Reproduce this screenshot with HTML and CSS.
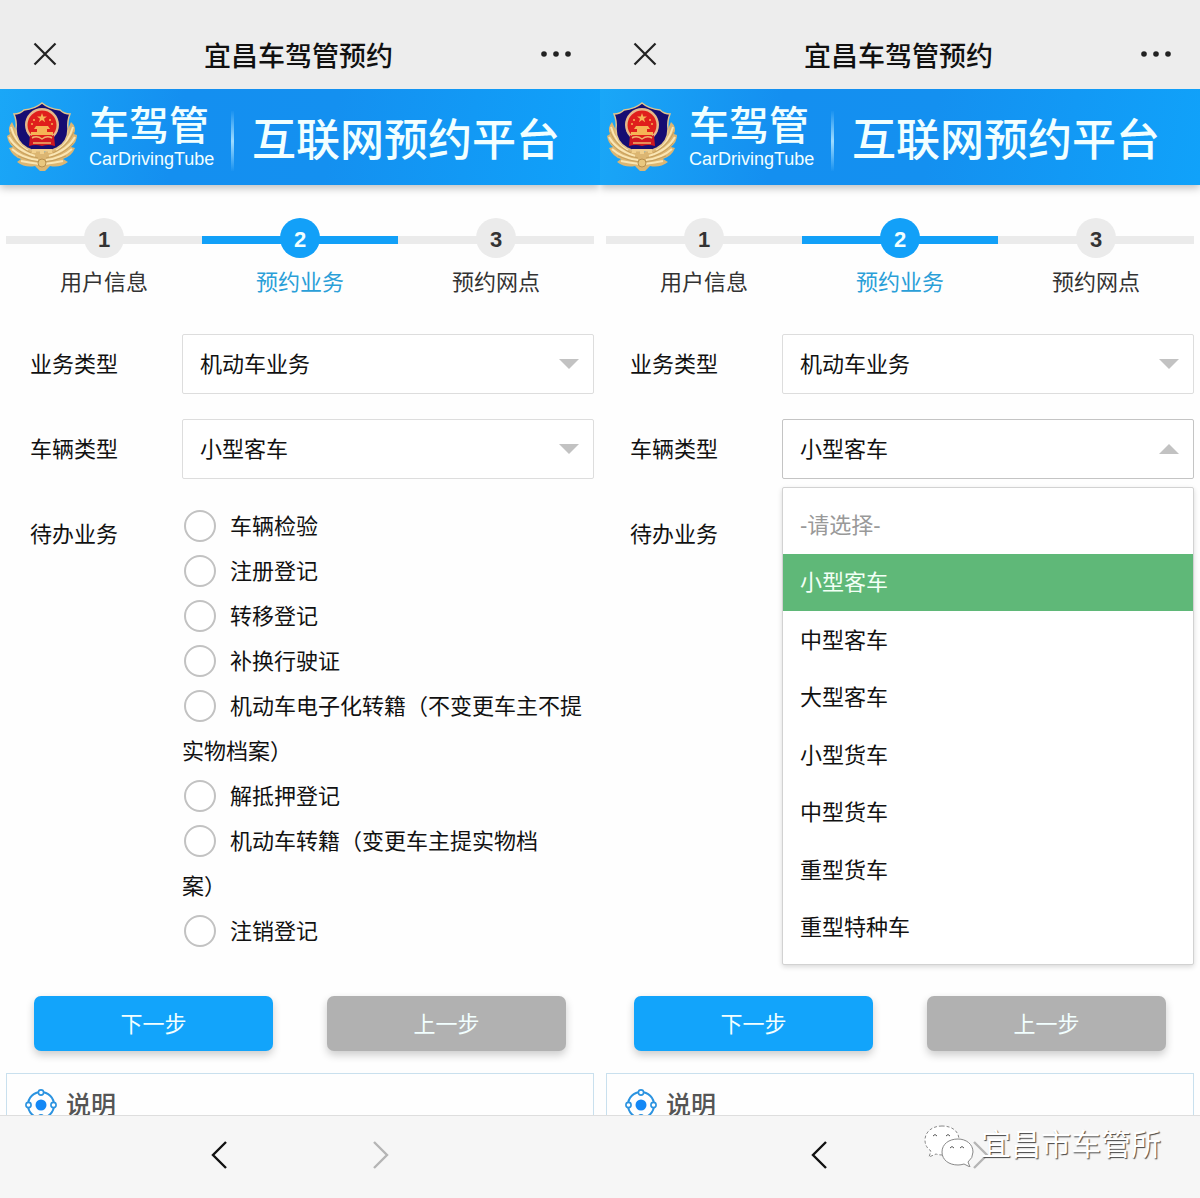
FILE: index.html
```html
<!DOCTYPE html>
<html lang="zh-CN">
<head>
  <meta charset="UTF-8" />
  <meta name="viewport" content="width=device-width, initial-scale=1" />
  <title>宜昌车驾管预约</title>
  <link rel="stylesheet" href="styles.css">
</head>
<body>

  <!-- shared icons -->
  <svg class="sprite" width="0" height="0" aria-hidden="true">
    <symbol id="icon-close" viewBox="0 0 24 24">
      <path d="M1.500 1.500 22.500 22.500M22.500 1.500 1.500 22.500" fill="none" stroke="#222" stroke-width="2.200" />
    </symbol>
    <symbol id="icon-more" viewBox="0 0 32 8">
      <g fill="#222"><circle cx="4" cy="4" r="2.800" /><circle cx="16" cy="4" r="2.800" /><circle cx="28" cy="4" r="2.800" /></g>
    </symbol>
    <symbol id="icon-back" viewBox="0 0 16 28">
      <path d="M15 1 2 14 15 27" fill="none" stroke="currentColor" stroke-width="2.400" />
    </symbol>
    <symbol id="icon-forward" viewBox="0 0 16 28">
      <path d="M1 1 14 14 1 27" fill="none" stroke="currentColor" stroke-width="2.400" />
    </symbol>
    <symbol id="icon-note" viewBox="0 0 32 32">
      <circle cx="16" cy="16" r="13" fill="none" stroke="#2b93e0" stroke-width="2" />
      <circle cx="16" cy="16" r="5.500" fill="#1488f5" />
      <g fill="#fff" stroke="#2b93e0" stroke-width="1.600">
        <circle cx="16" cy="3.500" r="2.600" /><circle cx="3.500" cy="16" r="2.600" />
        <circle cx="28.500" cy="16" r="2.600" /><circle cx="16" cy="28.500" r="2.600" />
      </g>
    </symbol>
    <symbol id="badge" viewBox="0 0 70 72">
      <path d="M5 21Q0 27 3 33L0 35Q1 42 6 46L2 47Q6 56 14 58L10 61Q18 67 28 65L33 70H38L43 65Q53 67 61 61L56 58Q65 55 68 47L64 46Q70 41 70 34L67 33Q70 26 64 21L56 40 36 52 14 40Z" fill="#dcb672" />
      <g fill="none" stroke="#fae6b4" stroke-width="2">
        <path d="M4 26Q8 41 21 49M2 36Q9 49 28 55M5 48Q15 57 31 59M14 60Q24 62 33 63" />
        <path d="M66 26Q62 41 49 49M68 36Q61 49 42 55M65 48Q55 57 39 59M56 60Q46 62 37 63" />
      </g>
      <g fill="none" stroke="#b8904f" stroke-width="0.600">
        <path d="M3 31Q9 45 24 52M4 42Q13 54 31 57M11 55Q22 60 33 61" />
        <path d="M67 31Q61 45 46 52M66 42Q57 54 39 57M59 55Q48 60 37 61" />
      </g>
      <path d="M35 2Q28 8 17 9Q13 13 7 13Q10 20 9 28Q9 41 20 47L27 50H43L50 47Q61 41 61 28Q60 20 63 13Q57 13 53 9Q42 8 35 2Z" fill="#160d72" stroke="#e2c48c" stroke-width="1.500" />
      <circle cx="35" cy="24" r="17" fill="#e7b98a" />
      <circle cx="35" cy="24" r="14.500" fill="#e01f1c" />
      <path d="M35 12 36.200 15.500H40L37 17.700 38.100 21.200 35 19 31.900 21.200 33 17.700 30 15.500H33.800Z" fill="#f6b455" />
      <g fill="#f6b455">
        <circle cx="27" cy="19" r="1" /><circle cx="43" cy="19" r="1" />
        <circle cx="25" cy="23" r="1" /><circle cx="45" cy="23" r="1" />
        <path d="M29 25H41L43 28H40V31H46V34H24V31H30V28H27Z" />
      </g>
      <path d="M23 34Q29 38 35 37Q41 38 47 34L48 45Q41 43 35 45Q29 43 22 45Z" fill="#cf1820" />
      <path d="M25 37Q30 34 35 38Q40 34 45 37M26 42H44" fill="none" stroke="#f0b56c" stroke-width="1.500" />
      <path d="M25 48H45V52H41V50H37V53H33V50H29V52H25Z" fill="#f1d08e" />
      <circle cx="35" cy="62" r="4" fill="#e9c77e" stroke="#b8904f" />
    </symbol>
    <symbol id="icon-wechat" viewBox="0 0 50 42">
      <g fill="#fff" stroke="#888" stroke-width="1">
        <path d="M18 2C8 2 1 8 1 16Q1 23 7 27L5 33 12 30Q15 31 19 31C28 31 35 25 35 16S28 2 18 2Z" stroke-dasharray="3 2" />
        <path d="M34 15C25 15 18 20 18 28S25 41 34 41Q37 41 40 40L46 43 44 38Q49 34 49 28C49 20 42 15 34 15Z" />
        <path d="M9 12Q11 9 13 12M22 12Q24 9 26 12M26 24Q28 21 30 24M36 24Q38 21 40 24" fill="none" stroke="#555" />
      </g>
    </symbol>
  </svg>

  <section class="screen">
    <header class="titlebar">
      <button class="icon-btn" aria-label="关闭"><svg width="24" height="24"><use href="#icon-close" /></svg></button>
      <h1>宜昌车驾管预约</h1>
      <button class="icon-btn" aria-label="更多"><svg width="32" height="8"><use href="#icon-more" /></svg></button>
    </header>
    <main>
      <div class="banner">
        <svg class="badge" width="70" height="72"><use href="#badge" /></svg>
        <div class="brand">
          <strong>车驾管</strong>
          <span>CarDrivingTube</span>
        </div>
        <div class="platform">互联网预约平台</div>
      </div>

      <ol class="steps">
        <li><b>1</b>用户信息</li>
        <li class="active"><b>2</b>预约业务</li>
        <li><b>3</b>预约网点</li>
      </ol>

      <form>
        <div class="field">
          <label for="type1">业务类型</label>
          <div class="select"><select id="type1"><option>机动车业务</option></select></div>
        </div>
        <div class="field">
          <label for="car1">车辆类型</label>
          <div class="select"><select id="car1"><option>小型客车</option></select></div>
        </div>
        <div class="field todo">
          <span class="caption" id="todo1">待办业务</span>
          <div class="radios" role="radiogroup" aria-labelledby="todo1">
            <label><input type="radio" name="todo">车辆检验</label>
            <label><input type="radio" name="todo">注册登记</label>
            <label><input type="radio" name="todo">转移登记</label>
            <label><input type="radio" name="todo">补换行驶证</label>
            <label><input type="radio" name="todo">机动车电子化转籍（不变更车主不提实物档案）</label>
            <label><input type="radio" name="todo">解抵押登记</label>
            <label><input type="radio" name="todo">机动车转籍（变更车主提实物档<br>案）</label>
            <label><input type="radio" name="todo">注销登记</label>
          </div>
        </div>
        <div class="actions">
          <button type="button" class="btn next">下一步</button>
          <button type="button" class="btn prev">上一步</button>
        </div>
      </form>

      <div class="note">
        <h2><svg width="32" height="32"><use href="#icon-note" /></svg>说明</h2>
      </div>
    </main>
    <footer class="toolbar">
      <button class="icon-btn" aria-label="后退"><svg width="16" height="28"><use href="#icon-back" /></svg></button>
      <button class="icon-btn" aria-label="前进" disabled><svg width="16" height="28"><use href="#icon-forward" /></svg></button>
    </footer>
  </section>

  <section class="screen">
    <header class="titlebar">
      <button class="icon-btn" aria-label="关闭"><svg width="24" height="24"><use href="#icon-close" /></svg></button>
      <h1>宜昌车驾管预约</h1>
      <button class="icon-btn" aria-label="更多"><svg width="32" height="8"><use href="#icon-more" /></svg></button>
    </header>
    <main>
      <div class="banner">
        <svg class="badge" width="70" height="72"><use href="#badge" /></svg>
        <div class="brand">
          <strong>车驾管</strong>
          <span>CarDrivingTube</span>
        </div>
        <div class="platform">互联网预约平台</div>
      </div>

      <ol class="steps">
        <li><b>1</b>用户信息</li>
        <li class="active"><b>2</b>预约业务</li>
        <li><b>3</b>预约网点</li>
      </ol>

      <form>
        <div class="field">
          <label for="type2">业务类型</label>
          <div class="select"><select id="type2"><option>机动车业务</option></select></div>
        </div>
        <div class="field">
          <label for="car2">车辆类型</label>
          <div class="select open">
            <select id="car2"><option>小型客车</option></select>
            <ul class="dropdown" role="listbox">
              <li class="tips" role="option">-请选择-</li>
              <li class="selected" role="option" aria-selected="true">小型客车</li>
              <li role="option">中型客车</li>
              <li role="option">大型客车</li>
              <li role="option">小型货车</li>
              <li role="option">中型货车</li>
              <li role="option">重型货车</li>
              <li role="option">重型特种车</li>
            </ul>
          </div>
        </div>
        <div class="field todo">
          <span class="caption">待办业务</span>
        </div>
        <div class="actions">
          <button type="button" class="btn next">下一步</button>
          <button type="button" class="btn prev">上一步</button>
        </div>
      </form>

      <div class="note">
        <h2><svg width="32" height="32"><use href="#icon-note" /></svg>说明</h2>
      </div>
    </main>
    <footer class="toolbar">
      <button class="icon-btn" aria-label="后退"><svg width="16" height="28"><use href="#icon-back" /></svg></button>
      <button class="icon-btn" aria-label="前进" disabled><svg width="16" height="28"><use href="#icon-forward" /></svg></button>
      <div class="watermark"><svg width="50" height="44"><use href="#icon-wechat" /></svg>宜昌市车管所</div>
    </footer>
  </section>

</body>
</html>
```

FILE: styles.css
```css
* {
  margin: 0;
  padding: 0;
  box-sizing: border-box;
}

body {
  display: flex;
  height: 100vh;
  background: #fefefe;
  color: #111;
  font-family: "Liberation Sans", "Noto Sans CJK SC", sans-serif;
  font-size: 22px;
}

.sprite {
  position: absolute;
}

svg {
  display: block;
  flex: none;
}

ol, ul {
  list-style: none;
}

button, select {
  font: inherit;
}

.screen {
  flex: 1;
  min-width: 0;
  display: flex;
  flex-direction: column;
}

.screen main {
  flex: 1;
  min-height: 0;
  overflow: hidden;
}

/* title bar */
.titlebar {
  display: flex;
  align-items: center;
  justify-content: space-between;
  height: 89px;
  padding: 19px 28px 0 33px;
  background: #ededed;
}

.titlebar h1 {
  font-size: 27px;
  font-weight: 500;
}

.icon-btn {
  border: none;
  background: none;
  color: #111;
  cursor: pointer;
}

.icon-btn:disabled {
  color: #b5b5b5;
}

/* banner */
.banner {
  display: flex;
  align-items: center;
  height: 96px;
  padding-left: 7px;
  background: linear-gradient(100deg, #1aa7f7 0%, #148ff0 30%, #1490f0 55%, #10a2fa 100%);
  box-shadow: 0 3px 8px rgba(0, 0, 0, 0.25);
  color: #f2ffff;
}

.brand {
  width: 142px;
  margin-left: 12px;
}

.brand strong {
  display: block;
  font-size: 40px;
  font-weight: 500;
  line-height: 44px;
}

.brand span {
  display: block;
  font-size: 18px;
  line-height: 22px;
}

.platform {
  margin-top: 8px;
  padding-left: 18px;
  border-left: 3px solid;
  border-image: linear-gradient(transparent, #9fdcff, transparent) 1;
  font-size: 44px;
  font-weight: 500;
  line-height: 60px;
  white-space: nowrap;
}

/* steps */
.steps {
  display: flex;
  padding: 33px 6px 0;
  line-height: 32px;
}

.steps li {
  flex: 1;
  display: flex;
  flex-direction: column;
  align-items: center;
  gap: 9px;
  background: linear-gradient(#ebebeb, #ebebeb) 0 18px / 100% 8px no-repeat;
  color: #333;
}

.steps b {
  width: 40px;
  height: 40px;
  border-radius: 50%;
  background: #ebebeb;
  line-height: 44px;
  text-align: center;
}

.steps .active {
  background-image: linear-gradient(#12a0f8, #12a0f8);
  color: #2a9fd8;
}

.steps .active b {
  background: #12a0f8;
  color: #f2ffff;
}

/* form */
form {
  padding: 35px 6px 0 30px;
}

.field {
  display: flex;
  margin-bottom: 25px;
}

.field > label,
.caption {
  width: 152px;
  line-height: 62px;
}

.field > label {
  height: 60px;
}

.select {
  position: relative;
  flex: 1;
}

.select select {
  display: block;
  width: 100%;
  height: 60px;
  padding: 0 17px;
  border: 1px solid #ddd;
  border-radius: 2px;
  background: #fff;
  color: #111;
  appearance: none;
}

.select::after {
  content: "";
  position: absolute;
  top: 25px;
  right: 15px;
  border: 10px solid transparent;
  border-top-color: #c2c2c2;
  border-bottom-width: 0;
}

.select.open select {
  border-color: #c4c4c4;
}

.select.open::after {
  border-top-width: 0;
  border-bottom: 10px solid #c2c2c2;
}

.dropdown {
  position: absolute;
  top: 68px;
  left: 0;
  right: 0;
  z-index: 1;
  padding: 8px 0;
  display: grid;
  grid-auto-rows: 1fr;
  height: 478px;
  border: 1px solid #d2d2d2;
  border-radius: 2px;
  background: #fff;
  box-shadow: 0 2px 5px rgba(0, 0, 0, 0.15);
}

.dropdown li {
  display: flex;
  align-items: center;
  padding: 0 17px 4px;
}

.dropdown .tips {
  color: #999;
}

.dropdown .selected {
  background: #5fb878;
  color: #f2fff5;
}

.todo {
  min-height: 450px;
  margin-bottom: 42px;
}

.radios {
  flex: 1;
}

.radios label {
  display: block;
  line-height: 45px;
}

.radios input {
  width: 32px;
  height: 32px;
  margin: -4px 14px 0 2px;
  border: 2px solid #c2c2c2;
  border-radius: 50%;
  background: #fff;
  vertical-align: middle;
  appearance: none;
}

.radios input:checked {
  border: 8px solid #12a0f8;
}

.actions {
  display: flex;
  gap: 54px;
  padding: 0 28px 0 4px;
}

.btn {
  flex: 1;
  height: 55px;
  padding-bottom: 4px;
  border: none;
  border-radius: 7px;
  box-shadow: 0 4px 8px rgba(0, 0, 0, 0.2);
  color: #f2ffff;
  cursor: pointer;
}

.next {
  background: #12a4fb;
}

.prev {
  background: #b1b1b1;
}

/* note */
.note {
  margin: 22px 6px;
  padding: 15px 18px 60px;
  border: 1px solid #c9e0ee;
}

.note h2 {
  display: flex;
  align-items: center;
  gap: 9px;
  color: #555;
  font-size: 25px;
  font-weight: 500;
  line-height: 32px;
}

/* bottom toolbar */
.toolbar {
  position: relative;
  z-index: 1;
  display: flex;
  align-items: center;
  justify-content: center;
  gap: 146px;
  height: 83px;
  padding-bottom: 4px;
  border-top: 1px solid #dedede;
  background: #f6f6f6;
}

.watermark {
  position: absolute;
  right: 39px;
  bottom: 31px;
  display: flex;
  align-items: center;
  gap: 7px;
  color: #fff;
  font-size: 30px;
  line-height: 44px;
  text-shadow: 1px 1px 1px #444;
}
```
